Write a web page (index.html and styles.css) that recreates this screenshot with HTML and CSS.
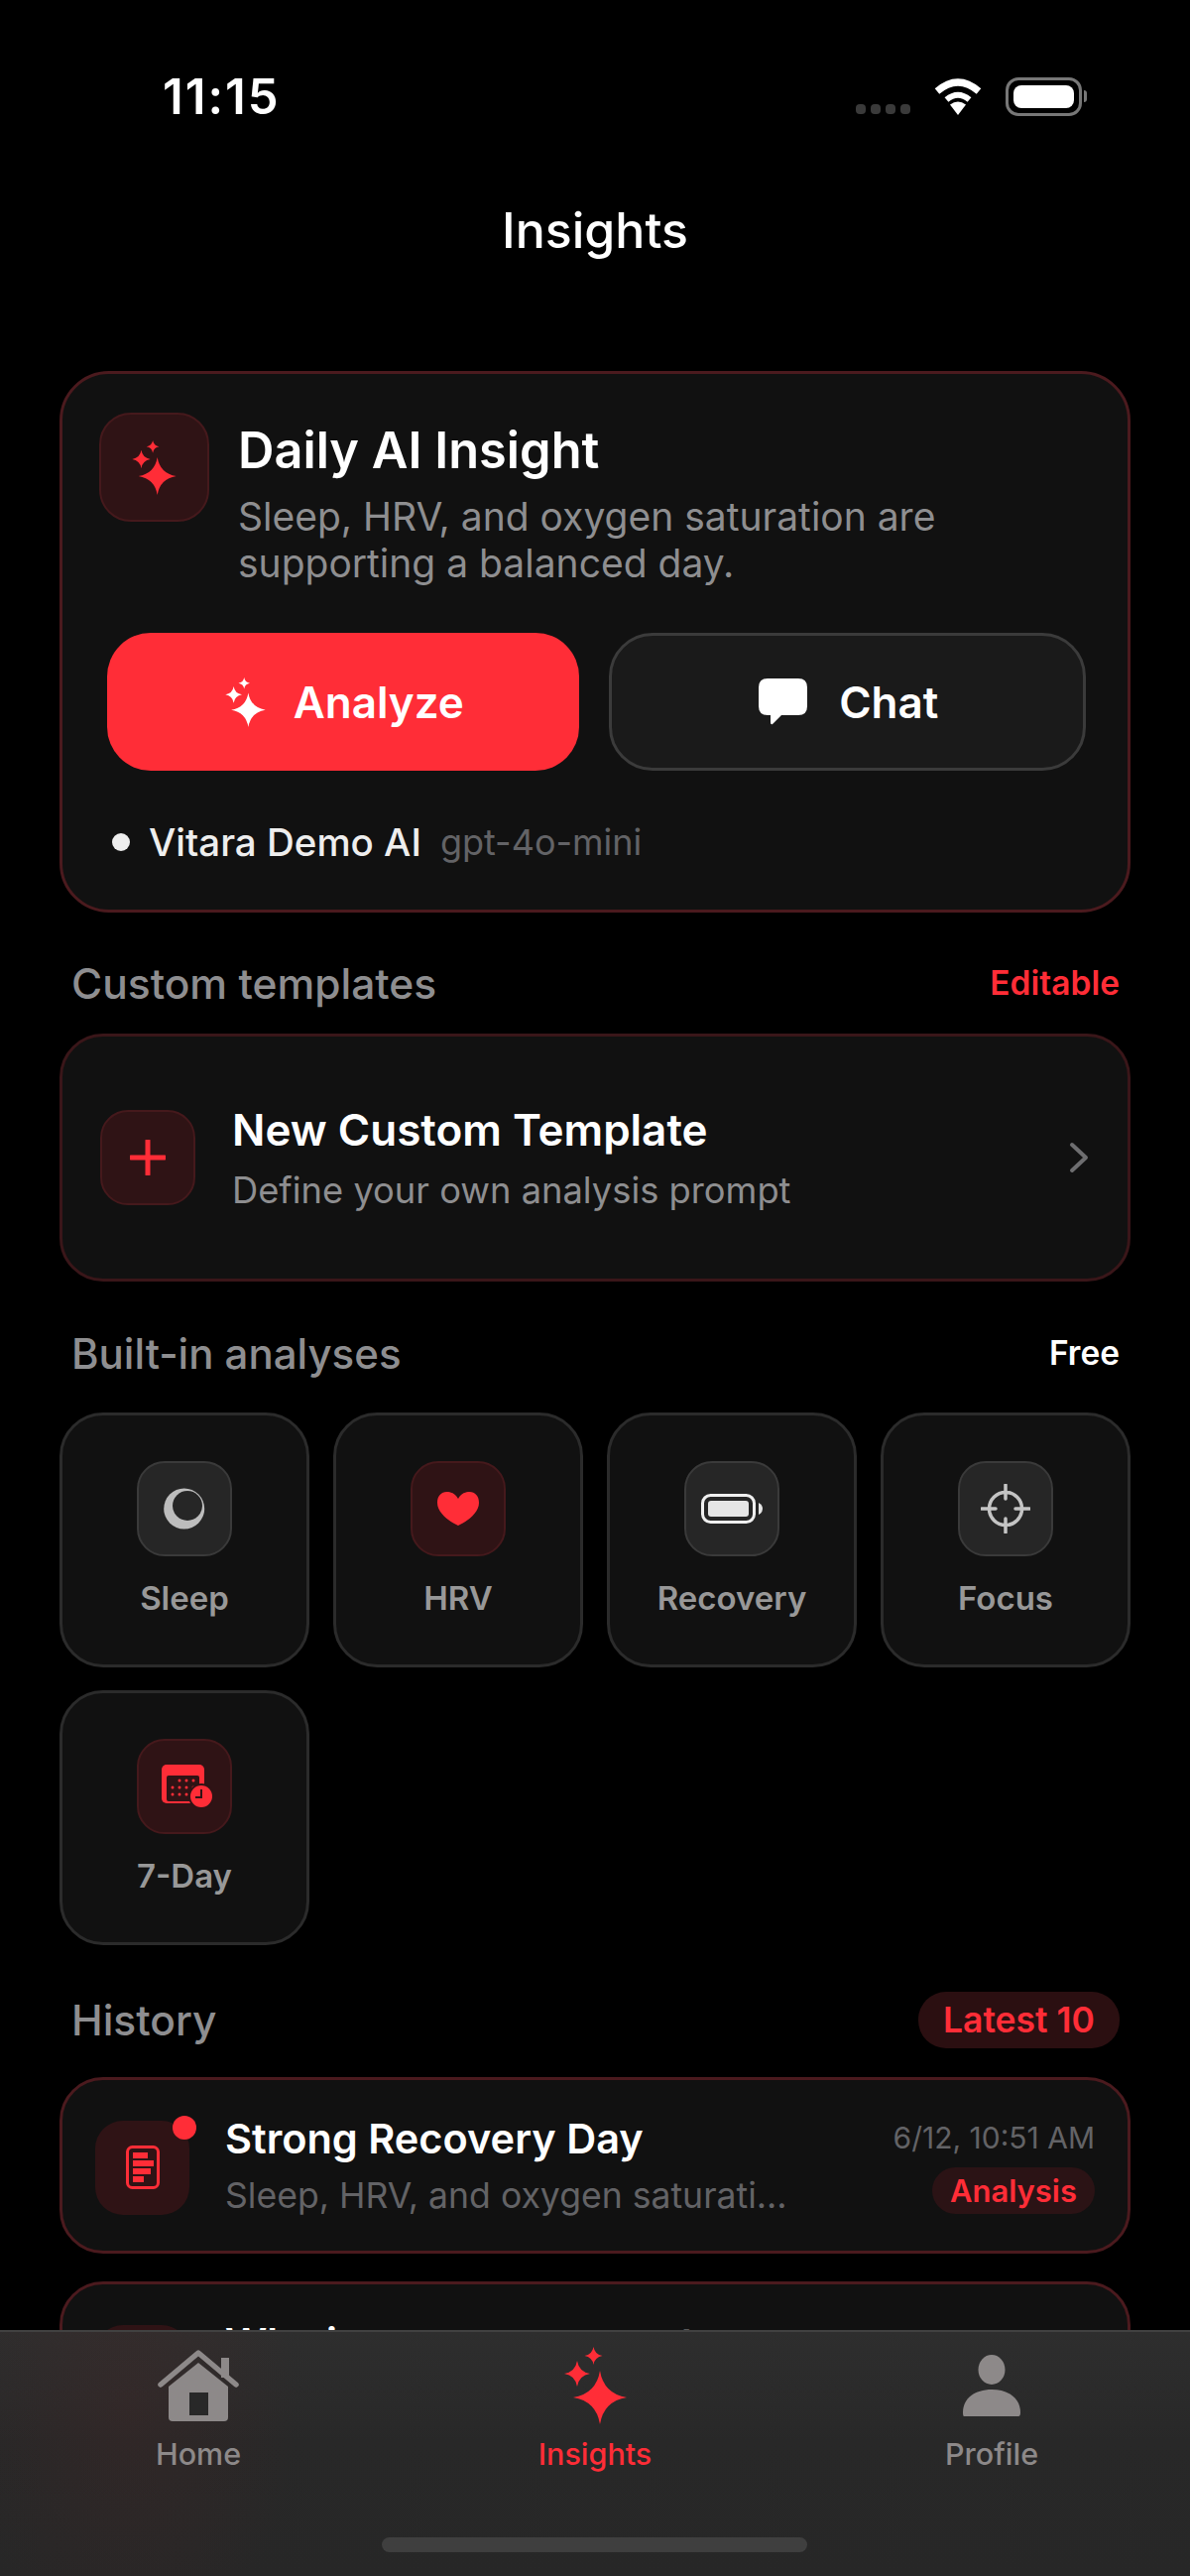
FILE: index.html
```html
<!DOCTYPE html>
<html>
    <head>
        <meta charset="utf-8">
        <meta name="viewport" content="width=device-width">
        <title>Insights</title>
        <link rel="stylesheet" href="styles.css">
    </head>
    <body>
        <svg class="defs" width="0" height="0">
            <symbol id="sparkles" viewBox="0 0 63 78">
                <path transform="translate(36 51) scale(27)" d="M0-1Q.14-.14 1 0Q.14.14 0 1Q-.14.14-1 0Q-.14-.14 0-1Z"/>
                <path transform="translate(13 27) scale(13)" d="M0-1Q.14-.14 1 0Q.14.14 0 1Q-.14.14-1 0Q-.14-.14 0-1Z"/>
                <path transform="translate(29.5 9) scale(9)" d="M0-1Q.14-.14 1 0Q.14.14 0 1Q-.14.14-1 0Q-.14-.14 0-1Z"/>
            </symbol>
        </svg>

        <div class="screen">
            <div class="status-bar">
                <span class="clock">11:15</span>
                <div class="status-icons">
                    <div class="signal"><i></i><i></i><i></i><i></i></div>
                    <svg class="wifi" width="52" height="38" viewBox="0 0 50 38">
                        <path d="M25 38L17 27.500Q25 21.500 33 27.500Z" fill="#fff"/>
                        <path d="M13.500 22.500Q25 13 36.500 22.500" fill="none" stroke="#fff" stroke-width="6"/>
                        <path d="M4 14Q25-4 46 14" fill="none" stroke="#fff" stroke-width="7"/>
                    </svg>
                    <div class="battery"><div class="battery-fill"></div></div>
                    <div class="battery-nub"></div>
                </div>
            </div>

            <h1 class="nav-title">Insights</h1>

            <main class="content">
                <section class="hero">
                    <div class="hero-top">
                        <div class="icon-box icon-box-hero red">
                            <svg class="spark-red" width="45" height="55"><use href="#sparkles"/></svg>
                        </div>
                        <div>
                            <h2 class="hero-title">Daily AI Insight</h2>
                            <p class="hero-text">Sleep, HRV, and oxygen saturation are<br>supporting a balanced day.</p>
                        </div>
                    </div>
                    <div class="hero-actions">
                        <button class="btn btn-primary">
                            <svg class="spark-white" width="41" height="50"><use href="#sparkles"/></svg>
                            Analyze
                        </button>
                        <button class="btn btn-dark">
                            <svg width="49" height="47" viewBox="0 0 49 47">
                                <path d="M9 0H40Q49 0 49 9V28Q49 37 40 37H23L14 46Q12 47 12 44V37H9Q0 37 0 28V9Q0 0 9 0Z" fill="#fff"/>
                            </svg>
                            Chat
                        </button>
                    </div>
                    <div class="provider">
                        <span class="provider-dot"></span>
                        <span class="provider-name">Vitara Demo AI</span>
                        <span class="provider-model">gpt-4o-mini</span>
                    </div>
                </section>

                <div class="section-head">
                    <h3>Custom templates</h3>
                    <span class="tag tag-red">Editable</span>
                </div>
                <section class="template-card">
                    <div class="icon-box red">
                        <svg width="36" height="36" viewBox="0 0 36 36">
                            <path d="M18 1V35M1 18H35" stroke="#ff2d37" stroke-width="5" stroke-linecap="round"/>
                        </svg>
                    </div>
                    <div class="template-text">
                        <div class="template-title">New Custom Template</div>
                        <div class="template-sub">Define your own analysis prompt</div>
                    </div>
                    <svg class="chevron" width="20" height="32" viewBox="0 0 20 32">
                        <path d="M3 3L17 16L3 29" fill="none" stroke="#6e6e70" stroke-width="4" stroke-linecap="round" stroke-linejoin="round"/>
                    </svg>
                </section>

                <div class="section-head section-head-tiles">
                    <h3>Built-in analyses</h3>
                    <span class="tag">Free</span>
                </div>
                <section class="tiles">
                    <div class="tile">
                        <div class="icon-box grey">
                            <svg width="42" height="42" viewBox="0 0 42 42">
                                <circle cx="20.700" cy="21" r="20.500" fill="#bdbdbd"/>
                                <circle cx="24" cy="18" r="15" fill="#262626"/>
                            </svg>
                        </div>
                        <span class="tile-label">Sleep</span>
                    </div>
                    <div class="tile">
                        <div class="icon-box red">
                            <svg width="42" height="34" viewBox="0 0 42 34">
                                <path d="M21 7C18 1 13 0 9.500 0C4 0 0 4 0 11C0 21 12 30 21 34C30 30 42 21 42 11C42 4 38 0 32.500 0C29 0 24 1 21 7Z" fill="#ff2d37"/>
                            </svg>
                        </div>
                        <span class="tile-label">HRV</span>
                    </div>
                    <div class="tile">
                        <div class="icon-box grey">
                            <svg width="62" height="30" viewBox="0 0 62 30">
                                <rect x="1.500" y="1.500" width="52" height="27" rx="8" fill="none" stroke="#f0f0f0" stroke-width="3"/>
                                <rect x="7" y="7" width="41" height="16" rx="3" fill="#e6e6e6"/>
                                <path d="M58 9Q62 11 62 15Q62 19 58 21Z" fill="#e6e6e6"/>
                            </svg>
                        </div>
                        <span class="tile-label">Recovery</span>
                    </div>
                    <div class="tile">
                        <div class="icon-box grey">
                            <svg width="50" height="50" viewBox="0 0 50 50">
                                <circle cx="25" cy="25" r="16.500" fill="none" stroke="#c4c4c4" stroke-width="3.500"/>
                                <path d="M25 1V15M25 35V49M1 25H15M35 25H49" stroke="#c4c4c4" stroke-width="3.500" stroke-linecap="round"/>
                            </svg>
                        </div>
                        <span class="tile-label">Focus</span>
                    </div>
                    <div class="tile">
                        <div class="icon-box red">
                            <svg class="calendar" width="52" height="44" viewBox="0 0 52 44">
                                <rect width="43" height="39" rx="5" fill="#ff2d37"/>
                                <rect x="5" y="11" width="33" height="26" rx="2" fill="#2f1315"/>
                                <g fill="#ff2d37">
                                    <circle cx="18" cy="16" r="1.500"/><circle cx="25" cy="16" r="1.500"/><circle cx="32" cy="16" r="1.500"/>
                                    <circle cx="11" cy="23" r="1.500"/><circle cx="18" cy="23" r="1.500"/><circle cx="25" cy="23" r="1.500"/><circle cx="32" cy="23" r="1.500"/>
                                    <circle cx="11" cy="30" r="1.500"/><circle cx="18" cy="30" r="1.500"/><circle cx="25" cy="30" r="1.500"/>
                                </g>
                                <circle cx="40" cy="32" r="13" fill="#2f1315"/>
                                <circle cx="40" cy="32" r="11" fill="#ff2d37"/>
                                <path d="M40 25V33H34" fill="none" stroke="#2f1315" stroke-width="2"/>
                            </svg>
                        </div>
                        <span class="tile-label">7-Day</span>
                    </div>
                </section>

                <div class="section-head section-head-history">
                    <h3>History</h3>
                    <span class="pill-latest">Latest 10</span>
                </div>
                <section class="history">
                    <div class="history-row">
                        <div class="history-icon">
                            <div class="icon-box icon-box-flat red">
                                <svg width="34" height="44" viewBox="0 0 34 44">
                                    <rect x="1.500" y="1.500" width="31" height="41" rx="5" fill="none" stroke="#ff2d37" stroke-width="3"/>
                                    <g fill="#ff2d37">
                                        <rect x="7" y="7" width="15" height="6"/>
                                        <rect x="7" y="15" width="21" height="6"/>
                                        <rect x="7" y="23" width="18" height="6"/>
                                        <rect x="7" y="31" width="11" height="6"/>
                                    </g>
                                </svg>
                            </div>
                            <span class="unread"></span>
                        </div>
                        <div class="history-text">
                            <div class="history-title">Strong Recovery Day</div>
                            <div class="history-sub">Sleep, HRV, and oxygen saturati...</div>
                        </div>
                        <div class="history-meta">
                            <div class="history-date">6/12, 10:51 AM</div>
                            <span class="pill-kind">Analysis</span>
                        </div>
                    </div>
                    <div class="history-row">
                        <div class="history-icon">
                            <div class="icon-box icon-box-flat red"></div>
                        </div>
                        <div class="history-text">
                            <div class="history-title">Why is your recovery strong</div>
                            <div class="history-sub">Sleep, HRV, and oxygen saturati...</div>
                        </div>
                        <div class="history-meta">
                            <div class="history-date">6/12, 10:38 AM</div>
                            <span class="pill-kind">Analysis</span>
                        </div>
                    </div>
                </section>
            </main>

            <nav class="tab-bar">
                <div class="tab">
                    <svg width="82" height="72" viewBox="0 0 82 72">
                        <path d="M11 37L41 13L71 37V68Q71 72 67 72H15Q11 72 11 68Z" fill="#8d8989"/>
                        <rect x="32" y="43" width="19" height="23" fill="#282828"/>
                        <rect x="64" y="8" width="8" height="20" fill="#8d8989"/>
                        <path d="M3 35L41 3L79 35" fill="none" stroke="#8d8989" stroke-width="5.500" stroke-linecap="round" stroke-linejoin="round"/>
                    </svg>
                    <span>Home</span>
                </div>
                <div class="tab tab-active">
                    <svg class="spark-red" width="63" height="78"><use href="#sparkles"/></svg>
                    <span>Insights</span>
                </div>
                <div class="tab">
                    <svg width="58" height="62" viewBox="0 0 58 62">
                        <ellipse cx="29" cy="15" rx="13.500" ry="15" fill="#8d8989"/>
                        <path d="M1 62Q0 62 0 58C0 44 12 35 29 35C46 35 58 44 58 58Q58 62 56 62Z" fill="#8d8989"/>
                    </svg>
                    <span>Profile</span>
                </div>
                <div class="home-indicator"></div>
            </nav>
        </div>
    </body>
</html>
```

FILE: styles.css
```css
* {
    box-sizing: border-box;
}
html, body {
    margin: 0;
    background-color: #000;
}
body {
    font-family: 'Inter', 'Liberation Sans', sans-serif;
    color: #fff;
}
h1, h2, h3, p {
    margin: 0;
}
.defs {
    display: block;
    height: 0;
}
.screen {
    position: relative;
    width: 1200px;
    height: 2597px;
    overflow: hidden;
    background-color: #000;
}

/* status bar */
.status-bar {
    display: flex;
    justify-content: space-between;
    align-items: center;
    height: 118px;
    padding: 76px 104px 0 164px;
}
.clock {
    font-size: 49px;
    font-weight: 600;
    letter-spacing: 2px;
}
.status-icons {
    display: flex;
    align-items: center;
}
.signal {
    display: flex;
    gap: 5px;
    align-self: flex-end;
    margin: 0 22px 2px 0;
}
.signal i {
    width: 10px;
    height: 10px;
    border-radius: 4px;
    background-color: #3a3a3a;
}
.wifi {
    margin-right: 22px;
}
.battery {
    width: 77px;
    height: 39px;
    padding: 5px;
    border: 3px solid #777;
    border-radius: 13px;
}
.battery-fill {
    height: 100%;
    border-radius: 8px;
    background-color: #fff;
}
.battery-nub {
    width: 3px;
    height: 12px;
    margin-left: 2px;
    border-radius: 0 3px 3px 0;
    background-color: #777;
}

.nav-title {
    height: 80px;
    margin-top: 74px;
    font-size: 50px;
    font-weight: 500;
    line-height: 80px;
    text-align: center;
}

.content {
    padding: 102px 60px 0;
}

/* icon boxes */
.icon-box {
    display: flex;
    flex: none;
    justify-content: center;
    align-items: center;
    width: 96px;
    height: 96px;
    border: 2px solid;
    border-radius: 28px;
}
.icon-box.red {
    background-color: #2f1315;
    border-color: #45191c;
}
.icon-box.grey {
    background-color: #262626;
    border-color: #3a3a3a;
}
.icon-box-hero {
    width: 111px;
    height: 110px;
    border-radius: 32px;
}
.icon-box-flat {
    width: 95px;
    height: 95px;
    border: none;
}
.spark-red {
    fill: #ff2d37;
}
.spark-white {
    fill: #fff;
}

/* daily insight */
.hero {
    height: 546px;
    padding: 39px 42px 0 37px;
    background-color: #111;
    border: 3px solid #4b1a1e;
    border-radius: 50px;
}
.hero-top {
    display: flex;
    gap: 29px;
}
.hero-title {
    margin-top: 8px;
    font-size: 50.500px;
    font-weight: 600;
    line-height: 60px;
}
.hero-text {
    margin-top: 13px;
    font-size: 39px;
    line-height: 47px;
    color: #8e8e90;
}
.hero-actions {
    display: flex;
    gap: 30px;
    margin: 47px 0 0 8px;
}
.btn {
    display: flex;
    flex: 1;
    justify-content: center;
    align-items: center;
    height: 139px;
    padding: 0 0 0 3px;
    border-radius: 44px;
    font-family: inherit;
    font-size: 44px;
    font-weight: 600;
    color: #fff;
}
.btn-primary {
    gap: 28px;
    background-color: #ff2d37;
    border: none;
}
.btn-dark {
    gap: 32px;
    background-color: #1a1a1a;
    border: 3px solid #3b3b3b;
}
.provider {
    display: flex;
    align-items: center;
    margin: 49px 0 0 13px;
}
.provider-dot {
    width: 18px;
    height: 18px;
    margin-right: 19px;
    border-radius: 50%;
    background-color: #eee;
}
.provider-name {
    margin-right: 19px;
    font-size: 38.500px;
    font-weight: 500;
    color: #eee;
}
.provider-model {
    font-size: 36px;
    color: #636366;
}

/* section headings */
.section-head {
    display: flex;
    justify-content: space-between;
    align-items: center;
    height: 50px;
    margin-top: 46px;
    margin-bottom: 26px;
    padding: 0 11px 0 12px;
}
.section-head h3 {
    font-size: 42.500px;
    font-weight: 500;
    color: #8e8e90;
}
.section-head-tiles {
    margin-top: 47px;
    margin-bottom: 35px;
}
.section-head-tiles h3 {
    font-size: 42px;
}
.section-head-history {
    height: 57px;
    margin-top: 47px;
    margin-bottom: 29px;
}
.tag {
    font-size: 33.500px;
    font-weight: 600;
}
.tag-red {
    color: #ff2d37;
}
.pill-latest {
    padding: 0 25px;
    border-radius: 28px;
    background-color: #2b0f11;
    font-size: 35.500px;
    font-weight: 600;
    line-height: 57px;
    color: #ff2d37;
}

/* new template */
.template-card {
    display: flex;
    align-items: center;
    height: 250px;
    padding: 0 38px;
    background-color: #111;
    border: 3px solid #3a1619;
    border-radius: 44px;
}
.template-text {
    flex: 1;
    margin-left: 37px;
}
.template-title {
    font-size: 44px;
    font-weight: 600;
    line-height: 56px;
}
.template-sub {
    margin-top: 10px;
    font-size: 36.300px;
    line-height: 46px;
    color: #8e8e90;
}
.chevron {
    margin-right: 1px;
}

/* built-in analyses */
.tiles {
    display: grid;
    grid-template-columns: repeat(4, 1fr);
    gap: 23px 24px;
}
.tile {
    display: flex;
    flex-direction: column;
    align-items: center;
    height: 257px;
    padding-top: 46px;
    background-color: #111;
    border: 3px solid #2b2b2b;
    border-radius: 44px;
}
.tile-label {
    margin-top: 20px;
    font-size: 33px;
    font-weight: 600;
    line-height: 44px;
    color: #989898;
}
.calendar {
    margin-left: 6px;
}

/* history */
.history {
    display: flex;
    flex-direction: column;
    gap: 28px;
}
.history-row {
    display: flex;
    align-items: center;
    height: 178px;
    padding: 0 33px;
    background-color: #111;
    border: 3px solid #4b1a1e;
    border-radius: 44px;
}
.history-icon {
    position: relative;
    margin-top: 4px;
}
.unread {
    position: absolute;
    top: -5px;
    right: -7px;
    width: 24px;
    height: 24px;
    border-radius: 50%;
    background-color: #ff2d37;
}
.history-text {
    flex: 1;
    margin-left: 36px;
}
.history-title {
    font-size: 41.500px;
    font-weight: 600;
    line-height: 54px;
}
.history-sub {
    margin-top: 8px;
    font-size: 35.600px;
    line-height: 46px;
    color: #636366;
}
.history-meta {
    display: flex;
    flex-direction: column;
    align-items: flex-end;
}
.history-date {
    font-size: 30px;
    line-height: 40px;
    color: #636366;
}
.pill-kind {
    margin-top: 10px;
    padding: 0 18px;
    border-radius: 24px;
    background-color: #2b1315;
    font-size: 31px;
    font-weight: 600;
    line-height: 47px;
    color: #ff2d37;
}

.tab-bar {
    position: absolute;
    left: 0;
    right: 0;
    bottom: 0;
    display: grid;
    grid-template-columns: repeat(3, 1fr);
    height: 248px;
    padding-top: 15px;
    background:
        radial-gradient(ellipse 170px 260px at 130px 30%, rgba(80, 35, 35, 0.22), transparent),
        linear-gradient(180deg, #2e2e2e 0%, #282828 45%, #272727 100%);
    border-top: 2px solid #414141;
}
.tab {
    display: flex;
    flex-direction: column;
    justify-content: flex-start;
    align-items: center;
    height: 130px;
    font-size: 30.500px;
    font-weight: 500;
    color: #8d8989;
}
.tab svg {
    flex: none;
    height: 78px;
}
.tab span {
    margin-top: 11px;
    line-height: 38px;
}
.tab-active {
    color: #ff2d37;
}
.home-indicator {
    position: absolute;
    left: 385px;
    bottom: 24px;
    width: 429px;
    height: 15px;
    border-radius: 8px;
    background-color: #3f3f3f;
}
```
